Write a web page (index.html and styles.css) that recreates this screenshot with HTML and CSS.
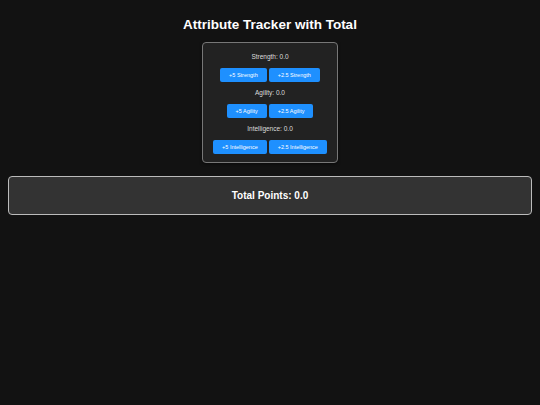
FILE: index.html
```html
<!DOCTYPE html>
<html lang="en">
<head>
  <meta charset="UTF-8" />
  <meta name="viewport" content="width=device-width, initial-scale=1" />
  <title>Attribute Tracker</title>
  <link rel="stylesheet" href="styles.css">
</head>
<body>
  <h1>Attribute Tracker with Total</h1>

  <div class="tracker">
    <div class="attribute">
      <p class="attr-label">Strength: <span id="strength">0.0</span></p>
      <div class="attr-buttons">
        <button data-attr="strength" data-amount="5">+5 Strength</button>
        <button data-attr="strength" data-amount="2.5">+2.5 Strength</button>
      </div>
    </div>

    <div class="attribute">
      <p class="attr-label">Agility: <span id="agility">0.0</span></p>
      <div class="attr-buttons">
        <button data-attr="agility" data-amount="5">+5 Agility</button>
        <button data-attr="agility" data-amount="2.5">+2.5 Agility</button>
      </div>
    </div>

    <div class="attribute">
      <p class="attr-label">Intelligence: <span id="intelligence">0.0</span></p>
      <div class="attr-buttons">
        <button data-attr="intelligence" data-amount="5">+5 Intelligence</button>
        <button data-attr="intelligence" data-amount="2.5">+2.5 Intelligence</button>
      </div>
    </div>
  </div>

  <div class="total-box">
    Total Points: <span id="total">0.0</span>
  </div>

  <script>
    const points = { strength: 0, agility: 0, intelligence: 0 };
    const totalEl = document.getElementById("total");

    document.querySelectorAll(".attr-buttons button").forEach(btn => {
      btn.addEventListener("click", () => {
        const attr = btn.dataset.attr;
        points[attr] += parseFloat(btn.dataset.amount);
        document.getElementById(attr).textContent = points[attr].toFixed(1);

        const total = points.strength + points.agility + points.intelligence;
        totalEl.textContent = total.toFixed(1);
      });
    });
  </script>
</body>
</html>
```

FILE: styles.css
```css
:root {
  --page-bg: #121212;
  --card-bg: #222;
  --total-bg: #333;
  --text-color: #fff;
  --muted-text: #ddd;
  --btn-bg: #1e90ff;
  --btn-hover-bg: #1878d8;
}

* {
  box-sizing: border-box;
}

body {
  margin: 8px;
  background: var(--page-bg);
  color: var(--text-color);
  font-family: "Liberation Sans", Arial, sans-serif;
  text-align: center;
}

h1 {
  font-size: 13.5px;
  line-height: 15px;
  font-weight: 700;
  margin: 9px 0 10px;
}

.tracker {
  display: flex;
  flex-direction: column;
  gap: 7px;
  width: fit-content;
  margin: 0 auto;
  padding: 10px 10px 8px;
  background: var(--card-bg);
  border: 1px solid #777;
  border-radius: 4px;
  box-shadow: 0 1px 3px rgba(0, 0, 0, 0.5);
}

.attribute {
  display: flex;
  flex-direction: column;
  gap: 7px;
}

.attr-label {
  margin: 0;
  font-size: 6.5px;
  line-height: 8px;
  color: var(--muted-text);
}

.attr-buttons {
  display: flex;
  justify-content: center;
  gap: 2px;
}

button {
  height: 14px;
  padding: 0 9px;
  border: none;
  border-radius: 2px;
  background: var(--btn-bg);
  color: #fff;
  font-family: inherit;
  font-size: 5.5px;
  cursor: pointer;
}

button:hover {
  background: var(--btn-hover-bg);
}

.total-box {
  margin-top: 13px;
  padding: 12px;
  background: var(--total-bg);
  border: 1px solid #bbb;
  border-radius: 4px;
  font-size: 10px;
  line-height: 13px;
  font-weight: 700;
}
```
